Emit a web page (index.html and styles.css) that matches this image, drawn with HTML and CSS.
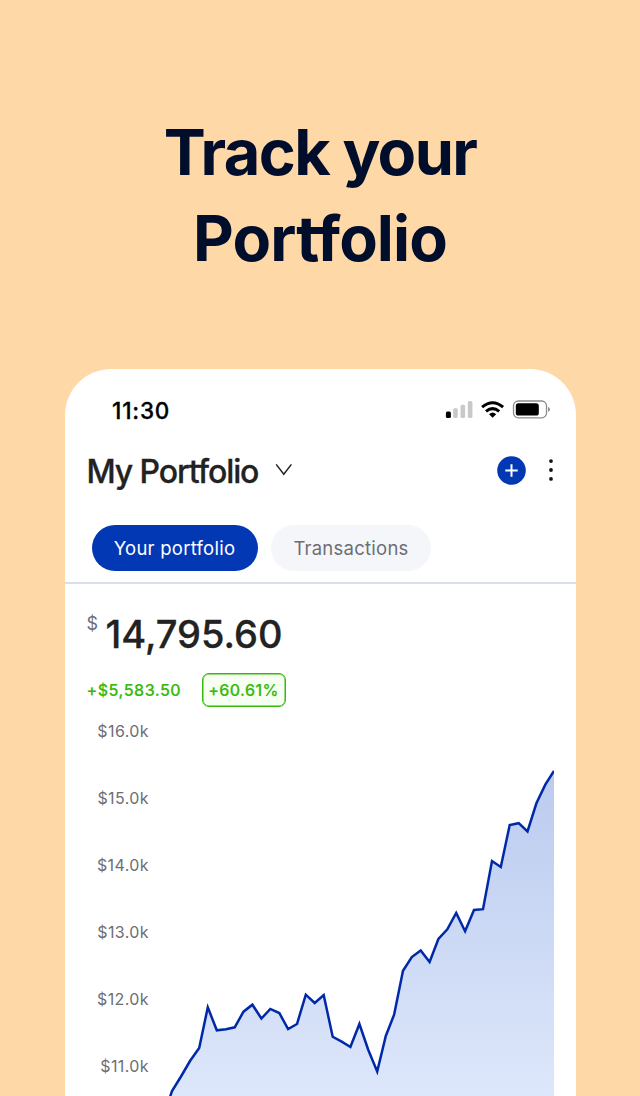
FILE: index.html
```html
<!doctype html>
<html lang="en">

	<head>
		<meta charset="utf-8" />
		<title>Track your Portfolio</title>
		<link rel="stylesheet" href="styles.css">
	</head>

	<body>
		<h1><span class="line-1">Track your</span><br><span class="line-2">Portfolio</span></h1>

		<main class="phone">
			<div class="status-bar">
				<span class="time">11:30</span>
				<svg class="status-icons" width="106" height="20" viewBox="0 0 106 20">
					<!-- signal -->
					<rect x="0.9" y="11.5" width="5" height="6.5" rx="1.5" fill="#000" />
					<g fill="#c9c9c9">
						<rect x="8.2" y="8.3" width="4.6" height="9.7" rx="1.5" />
						<rect x="15.5" y="4.8" width="4.6" height="13.2" rx="1.5" />
						<rect x="22.8" y="1" width="4.6" height="17" rx="1.5" />
					</g>
					<!-- wifi -->
					<g fill="none" stroke="#000" stroke-width="3">
						<path d="M37.1 7.2 Q47.6 -1.8 58.1 7.2" />
						<path d="M41 11.4 Q47.6 5.8 54.2 11.4" />
					</g>
					<path d="M44 14.2 Q47.6 11 51.2 14.2 L47.6 17.8 Z" fill="#000" />
					<!-- battery -->
					<rect x="68.5" y="1" width="33" height="16.8" rx="4.8" fill="#fff" stroke="#8c8c8c" stroke-width="1.3" />
					<rect x="70.8" y="3.2" width="23" height="12.4" rx="2.6" fill="#000" />
					<path d="M103.2 6.8 Q106.5 9.4 103.2 12 Z" fill="#777" />
				</svg>
			</div>

			<header>
				<h2>My Portfolio</h2>
				<svg class="arrow" width="18" height="14" viewBox="0 0 18 14">
					<path d="M1.2 1.4 L8.8 11.3 L16.4 1.4" fill="none" stroke="#222" stroke-width="1.5" />
				</svg>
				<a class="add-button">
					<svg width="29" height="29" viewBox="0 0 29 29">
						<circle cx="14.5" cy="14.5" r="14.3" fill="#0238b4" />
						<path d="M14.5 8.3 V20.7 M8.3 14.5 H20.7" stroke="#fff" stroke-width="2" />
					</svg>
				</a>
				<svg class="more" width="6" height="24" viewBox="0 0 6 24" fill="#111">
					<circle cx="3" cy="3.1" r="1.9" />
					<circle cx="3" cy="12" r="1.9" />
					<circle cx="3" cy="20.9" r="1.9" />
				</svg>
			</header>

			<nav>
				<a class="tab active">Your portfolio</a>
				<a class="tab">Transactions</a>
			</nav>

			<section class="balance">
				<span class="currency">$</span>
				<span class="amount">14,795.60</span>
			</section>

			<section class="gain">
				<span class="gain-value">+$5,583.50</span>
				<span class="gain-percent">+60.61%</span>
			</section>

			<section class="chart">
				<div class="axis">
					<span>$16.0k</span>
					<span>$15.0k</span>
					<span>$14.0k</span>
					<span>$13.0k</span>
					<span>$12.0k</span>
					<span>$11.0k</span>
				</div>
				<svg class="graph" width="389" height="376" viewBox="165 720 389 376">
					<defs>
						<linearGradient id="area" gradientUnits="userSpaceOnUse" x1="0" y1="770" x2="0" y2="1096">
							<stop offset="0" stop-color="#bbcbef" />
							<stop offset="1" stop-color="#dde7fb" />
						</linearGradient>
					</defs>
					<path fill="url(#area)" d="M170 1097 L172 1091 L181 1076.5 L190 1061 L199.2 1048 L207.8 1007.3 L216.8 1030.3 L226 1029.3 L234.7 1027.3 L243.5 1011.7 L252.4 1004.7 L261.4 1018.5 L270.3 1008.9 L279.3 1013 L288.1 1029 L297 1024 L305.8 994.7 L314.7 1003 L323.7 995 L332.7 1036.8 L341.7 1041.7 L350.4 1047 L359.4 1024 L368.3 1050 L377.2 1071.5 L385.8 1036 L394.1 1014.7 L403 970.7 L411.8 957 L420.7 950.4 L429.6 962 L438.4 939 L447.3 929.3 L456.2 913 L465.1 931.3 L474 910 L483 909.2 L492 861 L500.8 867 L509.7 825 L518.7 823.2 L527.5 831.5 L536.4 803.3 L545.3 784.7 L554 771 V1097 Z" />
					<path fill="none" stroke="#0029a8" stroke-width="2.5" d="M170 1097 L172 1091 L181 1076.5 L190 1061 L199.2 1048 L207.8 1007.3 L216.8 1030.3 L226 1029.3 L234.7 1027.3 L243.5 1011.7 L252.4 1004.7 L261.4 1018.5 L270.3 1008.9 L279.3 1013 L288.1 1029 L297 1024 L305.8 994.7 L314.7 1003 L323.7 995 L332.7 1036.8 L341.7 1041.7 L350.4 1047 L359.4 1024 L368.3 1050 L377.2 1071.5 L385.8 1036 L394.1 1014.7 L403 970.7 L411.8 957 L420.7 950.4 L429.6 962 L438.4 939 L447.3 929.3 L456.2 913 L465.1 931.3 L474 910 L483 909.2 L492 861 L500.8 867 L509.7 825 L518.7 823.2 L527.5 831.5 L536.4 803.3 L545.3 784.7 L554 771" />
				</svg>
			</section>
		</main>
	</body>
</html>
```
FILE: styles.css
```css
* {
	box-sizing: border-box;
}

body {
	margin: 0;
	height: 1096px;
	overflow: hidden;
	background: #ffd8a8;
	font-family: Inter, "Liberation Sans", sans-serif;
	color: #222;
}

h1 {
	margin: 0;
	padding-top: 110px;
	height: 369px;
	text-align: center;
	font-size: 63px;
	line-height: 85.5px;
	font-weight: 700;
	color: #000d2b;
}

.line-1 {
	letter-spacing: -1.6px;
}

.line-2 {
	letter-spacing: -0.9px;
}

/* phone card */

.phone {
	margin: 0 auto;
	width: 511px;
	height: 727px;
	background: white;
	border-radius: 46px 46px 0 0;
	overflow: hidden;
}

.status-bar {
	display: flex;
	align-items: center;
	justify-content: space-between;
	padding: 10px 24.5px 0 47.5px;
	height: 72px;
}

.time {
	font-size: 22.5px;
	font-weight: 500;
	letter-spacing: 0.8px;
	color: #000;
	-webkit-text-stroke: 0.3px #000;
}

/* title row */

header {
	display: flex;
	align-items: center;
	height: 60px;
	padding: 0 21.5px 2px 22px;
}

h2 {
	margin: 2px 0 0;
	width: 172px;
	font-size: 32px;
	font-weight: 500;
	letter-spacing: -1.1px;
	white-space: nowrap;
	-webkit-text-stroke: 0.3px #222;
}

.arrow {
	margin-left: 16.5px;
}

.add-button {
	display: flex;
	margin-left: auto;
}

.more {
	margin-left: 22px;
}

/* tabs */

nav {
	display: flex;
	gap: 13.5px;
	height: 83px;
	padding: 24px 27px 0;
	border-bottom: 2px solid #d9dfe9;
}

.tab {
	width: 160px;
	height: 46px;
	border-radius: 23px;
	background: #f5f6fa;
	text-align: center;
	line-height: 46px;
	font-size: 18.5px;
	letter-spacing: 0.25px;
	color: #6c6e75;
}

.tab.active {
	width: 166px;
	background: #0238b4;
	color: white;
}

/* balance */

.balance {
	display: flex;
	align-items: flex-start;
	height: 84px;
	padding: 22px 22px 0;
}

.currency {
	margin-top: 6px;
	width: 19px;
	font-size: 18px;
	line-height: 24px;
	color: #6c6e75;
}

.amount {
	font-size: 38px;
	line-height: 56px;
	font-weight: 500;
	-webkit-text-stroke: 0.3px #222;
}

.gain {
	display: flex;
	align-items: center;
	height: 44px;
	padding: 0 22px;
	font-size: 16px;
	font-weight: 500;
	letter-spacing: 0.5px;
	color: #37b90c;
	-webkit-text-stroke: 0.2px #37b90c;
}

.gain-value {
	width: 115px;
}

.gain-percent {
	width: 84px;
	height: 34px;
	border: 1px solid #37b90c;
	box-shadow: inset 0 0 0 0.5px #37b90c;
	border-radius: 7px;
	background: #f7fff2;
	text-align: center;
	line-height: 33px;
	letter-spacing: 0.4px;
}

/* chart */

.chart {
	display: flex;
	justify-content: space-between;
	padding: 8px 21.5px 0 0;
}

.axis {
	display: flex;
	flex-direction: column;
	width: 84.5px;
	text-align: right;
	font-size: 16px;
	line-height: 22px;
	letter-spacing: 0.4px;
	color: #6c6e75;
}

.axis span {
	height: 67.1px;
}

.graph {
	flex: none;
}
```
